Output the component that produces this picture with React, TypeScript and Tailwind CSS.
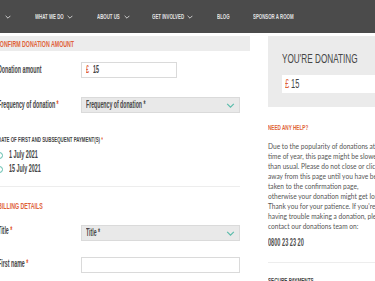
const sans = "font-['Liberation_Sans',Arial,sans-serif]";

// The site's face is a narrow grotesque; squeeze Liberation Sans to match.
function N({ children, className = 'scale-x-[0.54]' }: { children: React.ReactNode; className?: string }) {
  return <span className={`block w-max origin-left whitespace-nowrap ${className}`}>{children}</span>;
}

function Caret({ className = '' }: { className?: string }) {
  return (
    <svg viewBox="0 0 10 6" className={className} fill="none" stroke="currentColor" strokeWidth={1.4}>
      <polyline points="1,1 5,5 9,1" />
    </svg>
  );
}

function Label({ text, required }: { text: string; required?: boolean }) {
  return (
    <div className="w-[83px] shrink-0 text-[10px] font-bold leading-[10px] text-[#454545]">
      <N className="scale-x-[0.53]">
        {text}
        {required && <span className="text-[#e0502a]"> *</span>}
      </N>
    </div>
  );
}

function SelectBox({ text }: { text: string }) {
  return (
    <div className="flex h-[16px] w-[159px] items-center justify-between border border-[#dadada] bg-[#e9e9e9] pl-[4px] pr-[4px] text-[10px] font-bold leading-[10px] text-[#454545]">
      <N className="scale-x-[0.52]">{text}</N>
      <Caret className="h-[5px] w-[9px] text-[#5bbcab]" />
    </div>
  );
}

function Radio({ label }: { label: string }) {
  return (
    <div className="flex h-[10px] items-center text-[10px] font-bold leading-[10px] text-[#454545]">
      <span className="mr-[6px] h-[7px] w-[7px] shrink-0 rounded-full border border-[#5bbcab]" />
      <N className="scale-x-[0.54]">{label}</N>
    </div>
  );
}

export default function App() {
  return (
    <div className={`h-[281px] w-[375px] overflow-hidden bg-white ${sans}`}>
      {/* Top nav */}
      <nav className="flex h-[33px] items-center bg-[#4b4b4b] text-[7.5px] font-bold leading-[8px] text-[#e2e2e2]">
        <span className="-ml-[18px] w-[20px]"><N className="scale-x-[0.58]">NEWS</N></span>
        <Caret className="ml-[3px] h-[4px] w-[6px]" />
        <span className="ml-[24px] w-[29px]"><N className="scale-x-[0.58]">WHAT WE DO</N></span>
        <Caret className="ml-[3px] h-[4px] w-[6px]" />
        <span className="ml-[24px] w-[24px]"><N className="scale-x-[0.58]">ABOUT US</N></span>
        <Caret className="ml-[3px] h-[4px] w-[6px]" />
        <span className="ml-[22px] w-[31px]"><N className="scale-x-[0.58]">GET INVOLVED</N></span>
        <Caret className="ml-[4px] h-[4px] w-[6px]" />
        <span className="ml-[24px] w-[11px]"><N className="scale-x-[0.58]">BLOG</N></span>
        <span className="ml-[25px] w-[40px]"><N className="scale-x-[0.58]">SPONSOR A ROOM</N></span>
      </nav>

      <div className="flex pt-[3px]">
        {/* Main form */}
        <div className="-ml-[6px] w-[256px] shrink-0">
          <div className="flex h-[15px] items-center bg-[#ececec] pl-[1.5px] text-[9px] font-bold leading-[10px] text-[#e0633a]">
            <N className="scale-x-[0.585]">CONFIRM DONATION AMOUNT</N>
          </div>

          <div className="pl-[4px]">
            <div className="mt-[11px] flex items-center">
              <Label text="Donation amount" />
              <div className="flex h-[16px] w-[96px] items-center border border-[#dadada] pl-[4px] text-[10px] font-bold leading-[10px] text-[#454545]">
                <span className="w-[7px] text-[#e0633a]"><N>£</N></span>
                <N>15</N>
              </div>
            </div>

            <div className="mt-[19px] flex items-center">
              <Label text="Frequency of donation" required />
              <SelectBox text="Frequency of donation *" />
            </div>

            <div className="mt-[23px] text-[7.5px] font-bold leading-[8px] text-[#454545]">
              <N className="scale-x-[0.58]">
                DATE OF FIRST AND SUBSEQUENT PAYMENT(S) <span className="text-[#e0502a]">*</span>
              </N>
            </div>
            <div className="-ml-[2px] mt-[6px] flex flex-col gap-[4px]">
              <Radio label="1 July 2021" />
              <Radio label="15 July 2021" />
            </div>

            <div className="ml-[2px] mt-[12px] h-px w-[240px] bg-[#ededed]" />

            <div className="mt-[14px] text-[9px] font-bold leading-[10px] text-[#e0633a]">
              <N className="scale-x-[0.585]">BILLING DETAILS</N>
            </div>

            <div className="mt-[14px] flex items-center">
              <div className="-mt-[4px]"><Label text="Title" required /></div>
              <SelectBox text="Title *" />
            </div>

            <div className="mt-[16px] flex items-center">
              <div className="-mt-[3px]"><Label text="First name" required /></div>
              <div className="h-[16px] w-[159px] border border-[#dadada]" />
            </div>
          </div>
        </div>

        {/* Sidebar */}
        <div className="ml-[18px] w-[130px] shrink-0">
          <div className="bg-[#ebebeb] pb-[14px] pl-[14px] pt-[17px]">
            <div className="text-[13px] leading-[12px] text-[#454545]">
              <N className="scale-x-[0.63]">YOU'RE DONATING</N>
            </div>
            <div className="mt-[10px] flex h-[18px] items-center bg-white pl-[3px] text-[12px] leading-[12px] text-[#454545]">
              <span className="w-[6px] text-[#e0633a]"><N className="scale-x-[0.62]">£</N></span>
              <N className="scale-x-[0.62]">15</N>
            </div>
          </div>

          <div className="mt-[16px] text-[8px] font-bold leading-[10px] text-[#e0633a]">
            <N className="scale-x-[0.58]">NEED ANY HELP?</N>
          </div>
          <p className="mt-[8px] whitespace-nowrap font-['Lato',sans-serif] text-[6.6px] leading-[10px] text-[#555]">
            Due to the popularity of donations at this<br />
            time of year, this page might be slower<br />
            than usual. Please do not close or click<br />
            away from this page until you have been<br />
            taken to the confirmation page,<br />
            otherwise your donation might get lost.<br />
            Thank you for your patience. If you're<br />
            having trouble making a donation, please<br />
            contact our donations team on:
          </p>
          <div className="mt-[7px] text-[10px] font-bold leading-[10px] text-[#505050]">
            <N className="scale-x-[0.56]">0800 23 23 20</N>
          </div>
          <div className="mt-[14px] h-px bg-[#ededed]" />
          <div className="mt-[13px] text-[8px] font-bold leading-[10px] text-[#454545]">
            <N className="scale-x-[0.58]">SECURE PAYMENTS</N>
          </div>
        </div>
      </div>
    </div>
  );
}
